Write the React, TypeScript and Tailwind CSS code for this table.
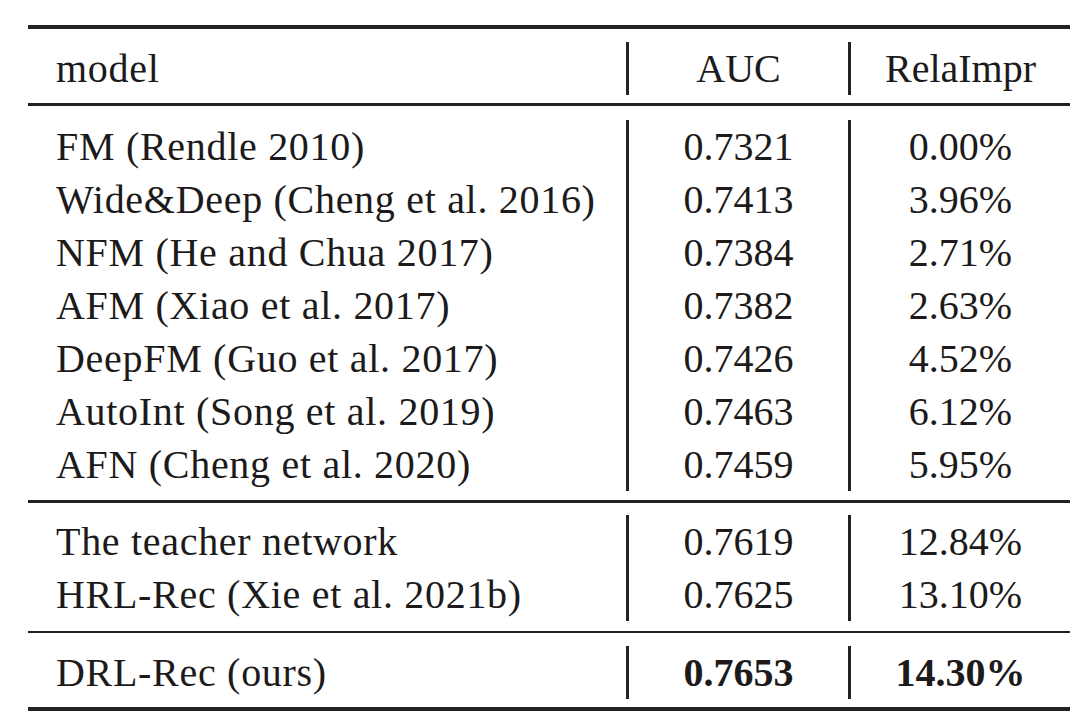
import React from 'react';

type Row = { model: string; auc: string; impr: string; bold?: boolean };

const sections: Row[][] = [
  [
    { model: 'FM (Rendle 2010)', auc: '0.7321', impr: '0.00%' },
    { model: 'Wide&Deep (Cheng et al. 2016)', auc: '0.7413', impr: '3.96%' },
    { model: 'NFM (He and Chua 2017)', auc: '0.7384', impr: '2.71%' },
    { model: 'AFM (Xiao et al. 2017)', auc: '0.7382', impr: '2.63%' },
    { model: 'DeepFM (Guo et al. 2017)', auc: '0.7426', impr: '4.52%' },
    { model: 'AutoInt (Song et al. 2019)', auc: '0.7463', impr: '6.12%' },
    { model: 'AFN (Cheng et al. 2020)', auc: '0.7459', impr: '5.95%' },
  ],
  [
    { model: 'The teacher network', auc: '0.7619', impr: '12.84%' },
    { model: 'HRL-Rec (Xie et al. 2021b)', auc: '0.7625', impr: '13.10%' },
  ],
  [{ model: 'DRL-Rec (ours)', auc: '0.7653', impr: '14.30%', bold: true }],
];

const Section: React.FC<{ rows: Row[]; className: string }> = ({ rows, className }) => (
  <div className={`flex ${className}`}>
    <div className="w-[598px] pl-[28px] tracking-[0.7px]">
      {rows.map((r, i) => (
        <div key={i} className="h-[53px] flex items-center whitespace-nowrap">{r.model}</div>
      ))}
    </div>
    <div className="w-[222px] border-l-[3px] border-[#222]">
      {rows.map((r, i) => (
        <div key={i} className={`h-[53px] flex items-center justify-center ${r.bold ? 'font-bold' : ''}`}>{r.auc}</div>
      ))}
    </div>
    <div className="flex-1 border-l-[3px] border-[#222]">
      {rows.map((r, i) => (
        <div key={i} className={`h-[53px] flex items-center justify-center ${r.bold ? 'font-bold' : ''}`}>{r.impr}</div>
      ))}
    </div>
  </div>
);

const App: React.FC = () => {
  return (
    <div className="w-[1080px] h-[728px] bg-white pt-[25px] pl-[28px] text-[#1c1a1a] text-[40px] leading-none" style={{ fontFamily: '"Liberation Serif", serif' }}>
      <div className="w-[1042px] border-t-[4px] border-b-[4px] border-[#222]">
        <Section rows={[{ model: 'model', auc: 'AUC', impr: 'RelaImpr' }]} className="pt-[13px] pb-[8px] border-b-[3px] border-[#222]" />
        <Section rows={sections[0]} className="pt-[14px] pb-[9px] border-b-[3px] border-[#222]" />
        <Section rows={sections[1]} className="pt-[12px] pb-[10px] border-b-[2px] border-[#222]" />
        <Section rows={sections[2]} className="pt-[13px] pb-[8px]" />
      </div>
    </div>
  );
};

export default App;
